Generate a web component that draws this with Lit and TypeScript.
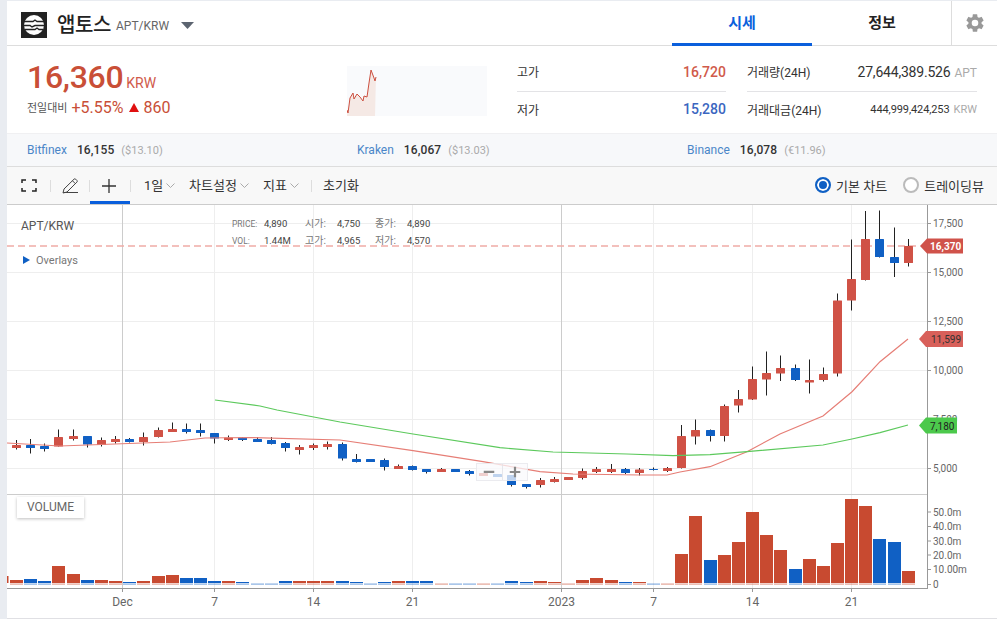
import { LitElement, html, svg, css } from 'lit'
import { customElement } from 'lit/decorators.js'

// wickTop, wickBottom, bodyTop, bodyBottom, colour - all in page pixels
type Candle = [number, number, number, number, 'r' | 'b']

const candles: Candle[] = [
  [440, 449.5, 445, 448, 'r'], [439, 453.5, 445, 448, 'b'], [443.5, 451.5, 446, 449, 'b'], [429.5, 446.5, 437, 446.5, 'r'],
  [429.5, 440.5, 436, 439, 'r'], [436, 447.5, 436, 444.5, 'b'], [437.5, 446.5, 440, 445, 'r'], [436, 443.5, 439, 442, 'r'],
  [438, 442.5, 439, 442, 'b'], [432.5, 445.5, 437, 442, 'r'], [427.5, 437.5, 430, 437, 'r'], [422.5, 432, 429, 432, 'r'],
  [423.5, 433.5, 429, 432, 'b'], [423.5, 436.5, 430, 433, 'b'], [433, 443.5, 433, 438.5, 'b'], [435.5, 441, 437.5, 440, 'r'],
  [437, 441, 437.5, 440, 'b'], [437, 442, 439, 442, 'b'], [437, 444.5, 440, 444, 'b'], [442, 451.5, 443, 448, 'b'],
  [445, 454.5, 447, 450, 'r'], [443.5, 450, 445, 448, 'r'], [441.5, 449.5, 444, 447, 'r'], [442.5, 460.5, 444, 458.5, 'b'],
  [454, 462.5, 459, 462, 'b'], [459, 462, 459, 462, 'b'], [458.5, 470.5, 460, 467, 'b'], [464.5, 469, 466, 469, 'r'],
  [465.5, 470.5, 466, 470, 'b'], [469, 473.5, 469, 472, 'b'], [468, 472, 469, 472, 'r'], [469, 472, 469, 472, 'b'],
  [470, 475.5, 471, 474, 'b'], [473, 476, 473, 476, 'r'], [474, 477, 474, 477, 'b'], [475, 486.5, 475, 485, 'b'],
  [484, 488.5, 484, 487, 'b'], [478, 487.5, 480, 485, 'r'], [477, 482.5, 479, 482, 'r'], [477, 480, 477, 480, 'r'],
  [468.5, 479.5, 471, 478, 'r'], [467, 473, 469, 472, 'r'], [464, 473, 469, 472, 'r'], [468, 474, 469, 473, 'b'],
  [468, 475.5, 469.5, 473, 'r'], [467.5, 470.5, 469, 470, 'b'], [467, 472, 468, 471, 'r'], [425, 468.5, 436, 468, 'r'],
  [419.5, 444.5, 430, 436.5, 'r'], [429.5, 441.5, 430, 436, 'b'], [404.5, 441.5, 406, 436, 'r'], [390, 412.5, 399, 405.5, 'r'],
  [366.5, 400, 379, 399.5, 'r'], [351.5, 395.5, 373, 379.5, 'r'], [355.5, 381, 368, 373.5, 'r'], [364.5, 381, 368, 380, 'b'],
  [359.5, 393.5, 380, 382.5, 'r'], [367.5, 381.5, 374, 380, 'r'], [293.5, 376.5, 300.5, 373.5, 'r'], [239.5, 310.5, 279, 300.5, 'r'],
  [211, 280.5, 239, 280, 'r'], [210.5, 257.5, 239, 257, 'b'], [227.5, 277, 257, 263, 'b'], [239, 266.5, 246, 263, 'r'],
]

// top y of each volume bar, 583 means only the light strip shows
const volumes = [
  580, 579, 581, 566, 574, 580, 580, 581, 582, 581, 576, 575, 578, 578, 581, 581,
  582, 583, 583, 581, 581, 581, 581, 581, 582, 583, 582, 581, 581, 581, 583, 583,
  583, 583, 583, 581, 582, 581, 582, 583, 580, 578, 580, 582, 582, 583, 583, 554,
  516, 560, 555, 542, 512, 535, 550, 569, 559, 566, 543, 499, 506, 539, 542, 571,
]

const redLine = '7,443 60,446 170,442 205,438 250,437.5 340,440 413,450.7 483,461.7 540,471.7 573,474 640,475 667,475 680,472 710,466.7 747,451.7 780,434 823,416 852,391.7 880,361.7 908,339'
const greenLine = '215,400 260,406 277,410 340,422 413,434 500,447.7 553,452 627,454 673,455.7 710,454.7 747,451.7 823,445 852,439 880,432.7 908,425'

const priceTicks: [string, number][] = [['17,500', 223], ['15,000', 272], ['12,500', 321], ['10,000', 370], ['7,500', 419], ['5,000', 468]]
const volTicks: [string, number][] = [['50.0m', 511.5], ['40.0m', 526], ['30.0m', 540.5], ['20.0m', 554.5], ['10.00m', 569], ['0', 584]]
const dates: [string, number, boolean][] = [['Dec', 122.5, true], ['7', 214.5, false], ['14', 313.5, false], ['21', 412.5, false], ['2023', 561.5, true], ['7', 653.5, false], ['14', 752.5, false], ['21', 851.5, false]]

const xAt = (i: number) => Math.floor(16.5 + 14.155 * i) + 0.5

@customElement('app-root')
export class AppRoot extends LitElement {
  static styles = css`
    :host {
      display: block;
      width: 997px;
      height: 619px;
      overflow: hidden;
      box-sizing: border-box;
      padding: 1px 0 0 7px;
      background: #e9ecf1;
      font-family: Roboto, 'Noto Sans CJK KR', sans-serif;
      color: #333;
    }
    .page { background: #fff; height: 617px; border-bottom: 1px solid #e0e0e4; }

    .head { display: flex; align-items: center; height: 44px; border-bottom: 1px solid #ddd; padding-left: 14px; }
    .logo { width: 26px; height: 26px; margin-top: 3px; }
    .name { font-size: 20px; font-weight: 500; color: #222; margin-left: 10px; letter-spacing: -0.4px; }
    .pair { font-size: 12px; color: #666; margin: 5px 0 0 5px; }
    .caret { margin: 5px 0 0 12px; width: 13px; height: 7px; }
    .tabs { display: flex; margin-left: auto; height: 100%; }
    .tab { width: 140px; text-align: center; font-size: 15px; font-weight: 700; line-height: 45px; color: #222; box-sizing: border-box; }
    .tab.on { color: #0a5fdc; border-bottom: 3px solid #0a5fdc; height: 45px; }
    .gear { width: 45px; border-left: 1px solid #ddd; margin-left: -1px; display: flex; align-items: center; justify-content: center; }
    .gear svg { width: 22px; height: 22px; fill: #999; }

    .quote { display: grid; grid-template-columns: 320px 140px 209px 230px; column-gap: 0; height: 87px; padding-left: 20px; }
    .now { padding-top: 13px; }
    .big { font-size: 32px; font-weight: 500; color: #c94f37; line-height: 36px; letter-spacing: -0.3px; }
    .unit { font-size: 14px; color: #d05a4a; margin-left: 3px; }
    .diff { display: flex; align-items: center; margin-top: 1px; height: 22px; color: #c94f37; font-size: 16px; }
    .diff .lbl { font-size: 11px; color: #555; margin-right: 4px; }
    .diff .up { width: 0; height: 0; border: 5px solid transparent; border-top: 0; border-bottom: 9px solid #e01010; margin: 0 4px 0 6px; }
    .spark { width: 140px; height: 50px; margin-top: 20px; background: #f9fafc; }
    .spark svg { display: block; }
    .stats { margin: 8px 0 0 30px; width: 209px; }
    .stats.wide { margin-left: 51px; width: 230px; }
    .row { display: flex; justify-content: space-between; align-items: center; height: 37px; box-sizing: border-box; padding-bottom: 2px; font-size: 12px; }
    .row + .row { border-top: 1px solid #e3e3e6; }
    .val { font-size: 14px; font-weight: 500; }
    .val.red { color: #d05a4a; }
    .val.blue { color: #3a66c0; }
    .num { font-size: 14px; letter-spacing: -0.2px; }
    .num.small { font-size: 11px; letter-spacing: -0.1px; }
    .num small { font-size: 12px; color: #aaa; margin-left: 4px; letter-spacing: 0; }
    .num.small small { font-size: 11px; }

    .venues { display: grid; grid-template-columns: 330px 330px 330px; height: 32px; background: #f7f8fa; border-top: 1px solid #f0f0f2; border-bottom: 1px solid #ddd; padding-left: 20px; box-sizing: content-box; font-size: 12px; align-items: center; width: 970px; }
    .venue { display: flex; align-items: baseline; }
    .venue a { color: #4a86c8; margin-right: 10px; }
    .venue b { font-weight: 500; color: #333; letter-spacing: 0.1px; }
    .venue span { color: #aaa; margin-left: 7px; font-size: 11px; }

    .tools { display: flex; align-items: center; height: 37px; background: #f8f8f8; border-bottom: 1px solid #ccc; font-size: 13px; color: #333; padding-left: 14px; }
    .tools svg { display: block; }
    .tool { display: flex; align-items: center; justify-content: center; height: 37px; box-sizing: border-box; }
    .sep { width: 1px; height: 12px; background: #ddd; flex: none; }
    .fs { width: 16px; margin-right: 13px; }
    .pen { width: 38px; }
    .plus { width: 40px; border-bottom: 3px solid #0a5fdc; padding: 3px 2px 0 0; }
    .menu { display: flex; align-items: center; padding-bottom: 2px; }
    .chev { width: 9px; height: 5px; margin: 1px 0 0 3px; }
    .radio { display: flex; align-items: center; margin-left: 5px; padding-bottom: 1px; }
    .dot { width: 16px; height: 16px; box-sizing: border-box; border: 2px solid #bbb; border-radius: 50%; margin-right: 5px; background: #fff; }
    .dot.on { border-color: #1060c4; box-shadow: inset 0 0 0 2px #fff; background: #1060c4; }
    .radios { margin-left: auto; display: flex; gap: 11px; padding-right: 13px; }

    .chart { position: relative; height: 413px; }
    .chart svg { display: block; font-family: Roboto, 'Noto Sans CJK KR', sans-serif; }
    .chip { position: absolute; left: 10px; top: 292px; width: 67px; height: 21px; line-height: 21px; text-align: center; font-size: 12px; color: #666; background: #fff; box-shadow: 0 1px 3px rgba(0, 0, 0, 0.25); }
    .zoom { position: absolute; left: 469px; top: 258px; width: 52px; height: 18px; display: flex; background: rgba(250, 250, 252, 0.75); border: 1px solid rgba(225, 225, 230, 0.6); box-sizing: border-box; }
    .zoom div { flex: 1; position: relative; }
    .zoom div + div { border-left: 1px solid rgba(225, 225, 230, 0.8); }
    .zoom svg { position: absolute; left: 50%; top: 50%; transform: translate(-50%, -50%); }
  `

  chevron() {
    return html`<svg class="chev" viewBox="0 0 9 5"><path d="M.5.5 4.5 4.5 8.5.5" fill="none" stroke="#aaa"/></svg>`
  }

  chartSvg() {
    return html`<svg width="990" height="413" viewBox="7 205 990 413">
      ${priceTicks.map(([, y]) => svg`<line x1="7" x2="927" y1=${y + 0.5} y2=${y + 0.5} stroke="#eee"/>`)}
      ${dates.map(([, x, major]) => svg`<line x1=${x} x2=${x} y1="205" y2="588" stroke=${major ? '#ccc' : '#eee'}/>`)}
      <line x1="7" x2="927" y1="494.5" y2="494.5" stroke="#ccc"/>
      <line x1="7" x2="920" y1="246" y2="246" stroke="#f0aca6" stroke-width="1.6" stroke-dasharray="7 4"/>

      ${candles.map(([wt, wb, bt, bb, c], i) => {
        const x = xAt(i)
        return svg`<line x1=${x} x2=${x} y1=${wt} y2=${wb} stroke="#222"/>
          <rect x=${x - 4.5} y=${bt} width="9" height=${bb - bt} rx="0.5" fill=${c === 'r' ? '#d05246' : '#1060c4'}/>`
      })}
      <polyline points=${redLine} fill="none" stroke="#e67e76" stroke-width="1.2"/>
      <polyline points=${greenLine} fill="none" stroke="#5cc95c" stroke-width="1.2"/>

      <rect x="7" y="576" width="1.5" height="7" fill="#c84a30"/>
      ${volumes.map((top, i) => {
        const x = xAt(i) - 6.5
        const col = candles[i][4] === 'r' ? '#c84a30' : '#1060c4'
        return svg`<rect x=${x} y=${top} width="13" height=${583 - top} fill=${col}/>
          <rect x=${x} y="583.5" width="13" height="1.2" fill=${col} opacity="0.5"/>`
      })}

      <line x1="7" x2="927.5" y1="588.5" y2="588.5" stroke="#999"/>
      <line x1="927.5" x2="927.5" y1="205" y2="589" stroke="#999"/>
      ${[...priceTicks, ...volTicks].map(([t, y]) => svg`
        <line x1="927" x2="931" y1=${y + 0.5} y2=${y + 0.5} stroke="#999"/>
        <text x="933" y=${y + 4} font-size="10" fill="#666">${t}</text>`)}
      ${dates.map(([t, x]) => svg`
        <line x1=${x} x2=${x} y1="588" y2="592" stroke="#999"/>
        <text x=${x} y="606" font-size="12" fill="#666" text-anchor="middle">${t}</text>`)}

      <text x="21" y="230" font-size="12" fill="#555">APT/KRW</text>
      <polygon points="23,256 30,260 23,264" fill="#1060c4"/>
      <text x="36" y="264" font-size="11" fill="#777">Overlays</text>
      <g font-size="9.5" fill="#444">
        <text x="232" y="227" font-size="8.5" fill="#777">PRICE:</text><text x="264" y="227">4,890</text>
        <text x="305" y="227" font-size="10" fill="#777">시가:</text><text x="337" y="227">4,750</text>
        <text x="375" y="227" font-size="10" fill="#777">종가:</text><text x="407" y="227">4,890</text>
        <text x="232" y="244" font-size="8.5" fill="#777">VOL:</text><text x="264" y="244">1.44M</text>
        <text x="305" y="244" font-size="10" fill="#777">고가:</text><text x="337" y="244">4,965</text>
        <text x="375" y="244" font-size="10" fill="#777">저가:</text><text x="407" y="244">4,570</text>
      </g>

      <polygon points="920,246 927,238.5 963,238.5 963,253.5 927,253.5" fill="#d0524a"/>
      <text x="930" y="249.5" font-size="10" font-weight="700" fill="#fff">16,370</text>
      <polygon points="919,339 926,331 963,331 963,347 926,347" fill="#d8605a"/>
      <text x="931" y="343" font-size="10" fill="#333">11,599</text>
      <polygon points="919,425.5 926,417.5 957,417.5 957,433.5 926,433.5" fill="#4cc94c"/>
      <text x="930" y="429.5" font-size="10" fill="#222">7,180</text>
    </svg>`
  }

  render() {
    return html`<div class="page">
      <div class="head">
        <svg class="logo" viewBox="0 0 26 26">
          <rect width="26" height="26" fill="#222"/>
          <circle cx="13" cy="13" r="10" fill="#fff"/>
          <path d="M3 9.5h9l2-1.5 2 1.5h7M3 13.5h6l2 1.5 3-1.5h9M4 17.5h10l2-1.5 2 1.5h4" fill="none" stroke="#222" stroke-width="1.4"/>
        </svg>
        <span class="name">앱토스</span>
        <span class="pair">APT/KRW</span>
        <svg class="caret" viewBox="0 0 13 7"><polygon points="0,0 13,0 6.5,7" fill="#5c6470"/></svg>
        <div class="tabs">
          <div class="tab on">시세</div>
          <div class="tab">정보</div>
          <div class="gear">
            <svg viewBox="0 0 24 24"><path d="M19.14,12.94c.04-.3.06-.61.06-.94 0-.32-.02-.64-.07-.94l2.03-1.58a.49.49,0,0,0,.12-.61l-1.92-3.32a.488.488,0,0,0-.59-.22l-2.39.96c-.5-.38-1.03-.7-1.62-.94L14.4,2.81c-.04-.24-.24-.41-.48-.41H10.08c-.24,0-.43.17-.47.41L9.25,5.35C8.66,5.59,8.12,5.92,7.63,6.29L5.24,5.33a.488.488,0,0,0-.59.22L2.74,8.87a.47.47,0,0,0,.12.61l2.03,1.58c-.05.3-.09.63-.09.94s.02.64.07.94l-2.03,1.58a.49.49,0,0,0-.12.61l1.92,3.32c.12.22.37.29.59.22l2.39-.96c.5.38,1.03.7,1.62.94l.36,2.54c.05.24.24.41.48.41h3.84c.24,0,.44-.17.47-.41l.36-2.54c.59-.24,1.13-.56,1.62-.94l2.39.96c.22.08.47,0,.59-.22l1.92-3.32c.12-.22.07-.47-.12-.61ZM12,15.6A3.6,3.6,0,1,1,15.6,12,3.61,3.61,0,0,1,12,15.6Z"/></svg>
          </div>
        </div>
      </div>

      <div class="quote">
        <div class="now">
          <div><span class="big">16,360</span><span class="unit">KRW</span></div>
          <div class="diff"><span class="lbl">전일대비</span>+5.55%<i class="up"></i>860</div>
        </div>
        <div class="spark">
          <svg width="140" height="50" viewBox="0 0 140 50">
            <polygon points="0,50 0,44 1,47 3,32 6,27 7,33 10,28 13,31 16,35 17,30 20,31 22,17 24,4 27,12 28,15 29,11 28,50" fill="#f5e9e5"/>
            <polyline points="0,44 1,47 3,32 6,27 7,33 10,28 13,31 16,35 17,30 20,31 22,17 24,4 27,12 28,15 29,11" fill="none" stroke="#cc5040"/>
          </svg>
        </div>
        <div class="stats">
          <div class="row"><span>고가</span><span class="val red">16,720</span></div>
          <div class="row"><span>저가</span><span class="val blue">15,280</span></div>
        </div>
        <div class="stats wide">
          <div class="row"><span>거래량(24H)</span><span class="num">27,644,389.526<small>APT</small></span></div>
          <div class="row"><span>거래대금(24H)</span><span class="num small">444,999,424,253<small>KRW</small></span></div>
        </div>
      </div>

      <div class="venues">
        <div class="venue"><a>Bitfinex</a><b>16,155</b><span>($13.10)</span></div>
        <div class="venue"><a>Kraken</a><b>16,067</b><span>($13.03)</span></div>
        <div class="venue"><a>Binance</a><b>16,078</b><span>(€11.96)</span></div>
      </div>

      <div class="tools">
        <div class="tool fs">
          <svg width="16" height="13" viewBox="0 0 16 13"><path d="M5 1H1v3M11 1h4v3M5 12H1V9M11 12h4V9" fill="none" stroke="#222" stroke-width="1.5"/></svg>
        </div>
        <i class="sep"></i>
        <div class="tool pen">
          <svg width="17" height="17" viewBox="0 0 17 17"><path d="M1 16l1-4L12 2.2a1.2 1.2 0 0 1 1.7 0l1.2 1.2a1.2 1.2 0 0 1 0 1.7L5 15ZM1.5 15.5H16M10.5 3.8l2.8 2.8" fill="none" stroke="#444"/></svg>
        </div>
        <i class="sep"></i>
        <div class="tool plus">
          <svg width="14" height="14" viewBox="0 0 14 14"><path d="M7 0v14M0 7h14" stroke="#333" stroke-width="1.3"/></svg>
        </div>
        <i class="sep"></i>
        <div class="menu" style="margin-left:13px;width:45px">1일${this.chevron()}</div>
        <div class="menu" style="width:74px">차트설정${this.chevron()}</div>
        <div class="menu" style="width:48px">지표${this.chevron()}</div>
        <i class="sep"></i>
        <div class="menu" style="margin-left:11px">초기화</div>
        <div class="radios">
          <div class="radio"><i class="dot on"></i>기본 차트</div>
          <div class="radio"><i class="dot"></i>트레이딩뷰</div>
        </div>
      </div>

      <div class="chart">
        ${this.chartSvg()}
        <div class="chip">VOLUME</div>
        <div class="zoom">
          <div><svg width="11" height="3" viewBox="0 0 11 3"><rect width="11" height="2.5" fill="#888"/></svg></div>
          <div><svg width="11" height="11" viewBox="0 0 11 11"><path d="M5.5 0v11M0 5.5h11" stroke="#888" stroke-width="2.2"/></svg></div>
        </div>
      </div>
    </div>`
  }
}
